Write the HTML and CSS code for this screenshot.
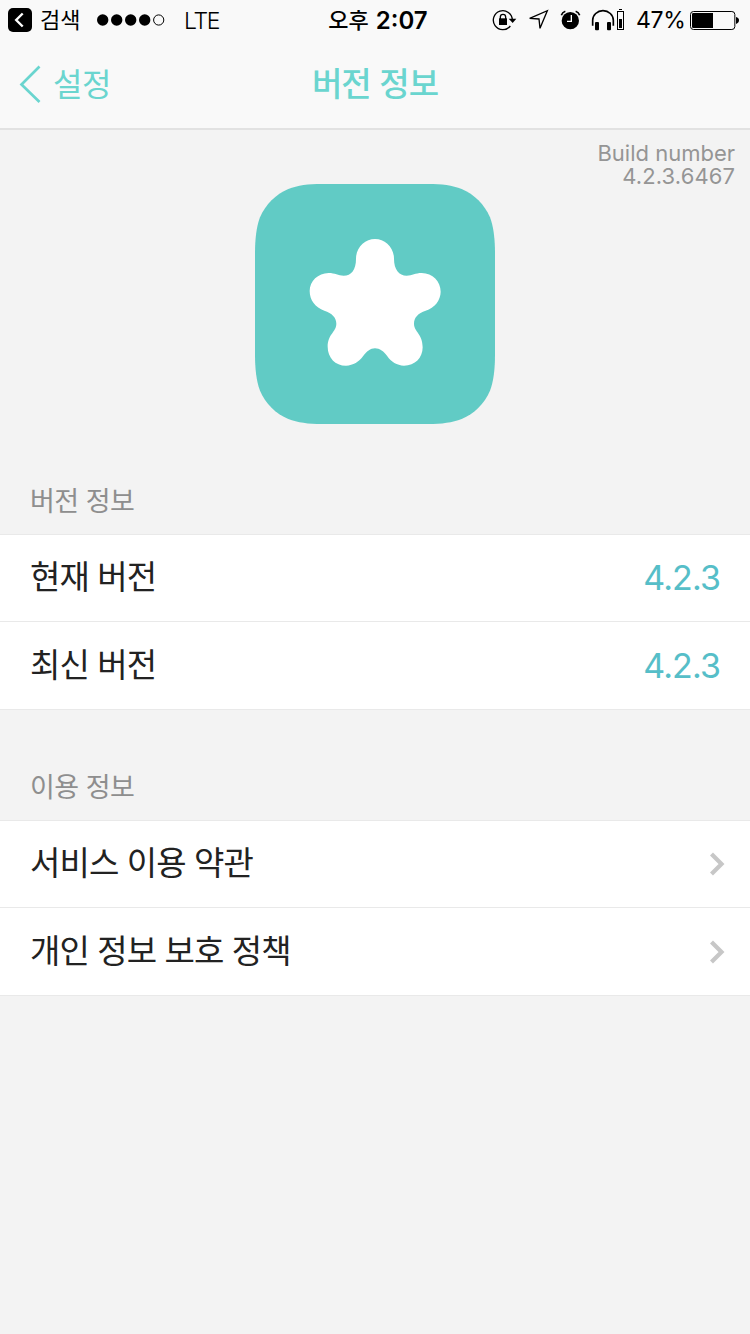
FILE: index.html
```html
<!DOCTYPE html>
<html lang="ko">
<head>
<meta charset="utf-8">
<title>버전 정보</title>
<link rel="stylesheet" href="styles.css">
</head>
<body>
<header class="header">
  <div class="status">
    <div class="status-left">
      <svg class="return-icon" width="24" height="24" viewBox="0 0 24 24"><rect width="24" height="24" rx="5"/><path d="M14.700 5.500 8.200 12l6.500 6.500" fill="none" stroke="#fff" stroke-width="2.400"/></svg>
      <span class="return-label">검색</span>
      <svg class="signal" width="68" height="12" viewBox="0 0 68 12"><circle cx="5.700" cy="6" r="5.700"/><circle cx="19.700" cy="6" r="5.700"/><circle cx="33.700" cy="6" r="5.700"/><circle cx="47.700" cy="6" r="5.700"/><circle cx="61.700" cy="6" r="5.100" fill="none" stroke="#000"/></svg>
      <span class="network">LTE</span>
    </div>
    <div class="clock"><span class="ampm">오후</span><span class="time">2:07</span></div>
    <div class="status-right">
      <svg width="25" height="40" viewBox="36 0 75 120"><path d="M97 60A28.500 28.500 0 1 0 91 78" fill="none" stroke="#000" stroke-width="4"/><path d="M86 56h23L98 69z"/><rect x="57" y="55" width="24" height="20"/><path d="M61 57v-6a8 8 0 0 1 16 0v6" fill="none" stroke="#000" stroke-width="4"/></svg>
      <svg width="21" height="40" viewBox="144 0 63 120"><path d="M149 55 202 32 180 85 177 57z" fill="none" stroke="#000" stroke-width="4"/></svg>
      <svg width="21" height="40" viewBox="240 0 63 120"><circle cx="271" cy="62" r="26"/><path d="M244 46q3-9 12-12M299 46q-3-9-12-12" fill="none" stroke="#000" stroke-width="5"/><path d="M274 45v19h-13" fill="none" stroke="#fff" stroke-width="4"/></svg>
      <svg class="headphones" width="34" height="40" viewBox="333 0 102 120"><path d="M338 77V61a31 29 0 0 1 62 0v16" fill="none" stroke="#000" stroke-width="5"/><rect x="345" y="66" width="12" height="25" rx="3"/><rect x="381" y="66" width="12" height="25" rx="3"/><path d="M417 28.500h9" stroke="#000" stroke-width="3"/><rect x="412.500" y="34.500" width="18" height="54" fill="none" stroke="#000" stroke-width="3"/><rect x="417" y="57" width="9" height="27"/></svg>
      <span class="percent">47%</span>
      <svg width="50" height="40" viewBox="630 0 150 120"><rect x="631.500" y="34.500" width="133" height="54" rx="9" fill="none" stroke="#000" stroke-width="3"/><path d="M640 39h59v45h-59q-4 0-4-4V43q0-4 4-4zM768 51q9 2 9 10t-9 11z"/></svg>
    </div>
  </div>
  <nav class="nav">
    <div class="back">
      <svg width="22" height="38" viewBox="0 0 22 38"><path d="M20.500 1.500 2.500 19.500l18 17.500" fill="none" stroke="#6ad5cf" stroke-width="2.700"/></svg>
      <span class="back-label">설정</span>
    </div>
    <h1 class="title">버전 정보</h1>
  </nav>
</header>
<main>
  <section class="hero">
    <div class="build"><p class="build-name">Build number</p><p class="build-value">4.2.3.6467</p></div>
    <svg class="app-icon" width="240" height="240" viewBox="30 27 720 720">
      <path fill="#61cbc5" d="M230 27H550C590 27 622 31 650 42C688 58 718 88 735 127C746 155 750 195 750 235V539C750 579 746 619 735 647C718 686 688 716 650 732C622 743 590 747 550 747H230C190 747 158 743 130 732C92 716 62 686 45 647C34 619 30 579 30 539V235C30 195 34 155 45 127C62 88 92 58 130 42C158 31 190 27 230 27Z"/>
      <path fill="#fff" d="M390 192C420 192 447 217 447 251C447 283 462 302 485 302C502 302 511 294 530 294C563 294 587 320 587 350C587 375 569 399 542 407C519 414 507 428 507 446C507 470 533 476 533 517C533 549 510 572 477 572C456 572 438 560 427 544C417 529 404 520 390 520C376 520 365 529 354 544C342 560 325 572 303 572C271 572 248 548 248 515C248 477 274 471 274 446C274 428 261 414 238 407C211 398 194 375 194 348C194 319 219 294 251 294C270 294 279 302 296 302C319 302 333 284 333 251C333 217 360 192 390 192Z"/>
    </svg>
  </section>
  <h2 class="section-title">버전 정보</h2>
  <ul class="list">
    <li class="row"><span class="label">현재 버전</span><span class="value">4.2.3</span></li>
    <li class="row"><span class="label">최신 버전</span><span class="value">4.2.3</span></li>
  </ul>
  <h2 class="section-title">이용 정보</h2>
  <ul class="list">
    <li class="row link"><span class="label">서비스 이용 약관</span><svg width="16" height="24" viewBox="0 0 16 24"><path d="M2.500 2 12.500 12l-10 10" fill="none" stroke="#c7c7c7" stroke-width="4.200"/></svg></li>
    <li class="row link"><span class="label">개인 정보 보호 정책</span><svg width="16" height="24" viewBox="0 0 16 24"><path d="M2.500 2 12.500 12l-10 10" fill="none" stroke="#c7c7c7" stroke-width="4.200"/></svg></li>
  </ul>
</main>
</body>
</html>
```
FILE: styles.css
```css
* { box-sizing: border-box; margin: 0; padding: 0; }
body {
  background: #f3f3f3;
  color: #222;
  font-family: Inter, "Noto Sans CJK KR", sans-serif;
  min-height: 1334px;
  white-space: nowrap;
}
svg { display: block; flex: none; }
.header { height: 130px; background: #f9f9f9; border-bottom: 2px solid #e2e2e2; }
.status { height: 40px; display: grid; grid-template-columns: 1fr 110px 1fr; color: #000; line-height: 40px; }
.status-left { display: flex; align-items: center; padding-left: 8px; height: 40px; }
.return-icon { margin-bottom: 1px; }
.return-label { font: 22px/36px "Noto Sans CJK KR", sans-serif; height: 40px; margin-left: 8px; width: 41px; }
.signal { margin-left: 16px; }
.network { font-size: 23px; font-weight: 300; letter-spacing: -1.3px; margin-left: 19px; padding-top: 1px; }
.clock { display: flex; justify-content: center; gap: 7px; padding-left: 6px; font-weight: 600; }
.ampm { font: 500 22px/37px "Noto Sans CJK KR", sans-serif; }
.time { font-size: 24px; line-height: 41px; }
.status-right { display: flex; justify-content: flex-end; padding-right: 10px; }
.status-right svg + svg { margin-left: 11px; }
.status-right .headphones { margin-left: 10px; }
.percent { width: 65px; padding-left: 11px; font-size: 23px; line-height: 41px; letter-spacing: -0.3px; }
.nav { height: 88px; display: grid; grid-template-columns: 1fr auto 1fr; align-items: center; color: #6ad5cf; }
.back { display: flex; align-items: center; padding-left: 19px; gap: 12px; }
.back-label { font: 32px/80px "Noto Sans CJK KR", sans-serif; letter-spacing: -0.5px; height: 84px; }
.title { font: 500 33px/80px "Noto Sans CJK KR", sans-serif; letter-spacing: -0.9px; height: 84px; }
.hero { height: 340px; display: grid; justify-items: center; padding-top: 12px; grid-template-rows: 42px 240px; }
.build { justify-self: end; padding-right: 15px; text-align: right; font-size: 22px; line-height: 23px; color: #959595; }
.build-name, .build-value { height: 23px; }
.build-value { letter-spacing: 0.1px; }
.section-title { height: 64px; padding-left: 30px; font: 27px/60px "Noto Sans CJK KR", sans-serif; letter-spacing: -0.5px; color: #8e8e8e; }
.list { list-style: none; border-top: 1px solid #e9e9e9; background: #fff; }
.list + .section-title { margin-top: 46px; }
.row { height: 88px; display: flex; align-items: center; justify-content: space-between; padding: 0 30px; border-bottom: 1px solid #e9e9e9; }
.row:first-child { height: 87px; }
.link { padding-right: 25px; }
.label { font: 33px/78px "Noto Sans CJK KR", sans-serif; letter-spacing: -0.9px; height: 84px; }
.row:first-child .label { line-height: 79px; }
.value { font-size: 34px; color: #56bec8; letter-spacing: -0.9px; margin-right: 0; }
.row:first-child .value { margin-bottom: 2px; }
```
